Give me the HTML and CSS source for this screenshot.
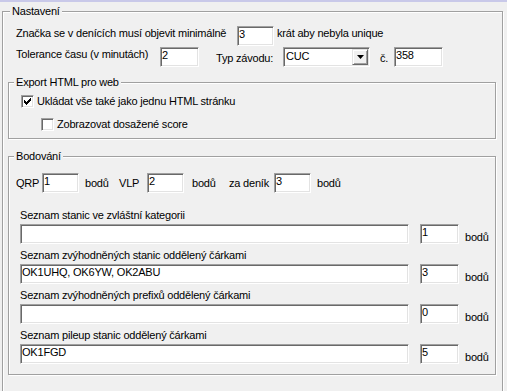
FILE: index.html
```html
<!DOCTYPE html>
<html lang="cs">
<head>
    <meta charset="UTF-8">
    <title>Nastavení</title>
    <link rel="stylesheet" href="styles.css">
</head>
<body>
<div class="topline"></div>
<fieldset class="group main">
    <legend>Nastavení</legend>
    <div class="row row-min">
        <span class="txt lbl-min">Značka se v denících musí objevit minimálně</span>
        <input class="edit edit-s" type="text" value="3">
        <span class="txt after-min">krát aby nebyla unique</span>
    </div>
    <div class="row row-tol">
        <span class="txt lbl-tol">Tolerance času (v minutách)</span>
        <input class="edit edit-m" type="text" value="2">
        <span class="txt mid lbl-typ">Typ závodu:</span>
        <div class="combo">
            <span class="combo-text">CUC</span>
            <span class="combo-btn"><svg width="7" height="4" viewBox="0 0 7 4"><path d="M0 0h7L3.5 4z"/></svg></span>
        </div>
        <span class="txt mid lbl-cislo">č.</span>
        <input class="edit edit-l" type="text" value="358">
    </div>

    <fieldset class="group sub export">
        <legend>Export HTML pro web</legend>
        <label class="chk-row chk-html">
            <span class="check"><svg width="7" height="7" viewBox="0 0 7 7"><path d="M0 2h1v1h1v1h1v-1h1v-1h1v-1h1v-1h1v3h-1v1h-1v1h-1v1h-1v1h-1v-1h-1v-1h-1v-1h-1z"/></svg></span>
            Ukládat vše také jako jednu HTML stránku
        </label>
        <label class="chk-row chk-score">
            <span class="check"></span>
            Zobrazovat dosažené score
        </label>
    </fieldset>

    <fieldset class="group sub points">
        <legend>Bodování</legend>
        <div class="row row-qrp">
            <span class="txt lbl-qrp">QRP</span>
            <input class="edit edit-s" type="text" value="1">
            <span class="txt unit-qrp">bodů</span>
            <span class="txt lbl-vlp">VLP</span>
            <input class="edit edit-s" type="text" value="2">
            <span class="txt unit-vlp">bodů</span>
            <span class="txt lbl-denik">za deník</span>
            <input class="edit edit-s" type="text" value="3">
            <span class="txt unit-denik">bodů</span>
        </div>
        <div class="lists">
            <div class="item">
                <span class="txt">Seznam stanic ve zvláštní kategorii</span>
                <div class="item-row">
                    <input class="edit edit-wide" type="text" value="">
                    <input class="edit edit-m" type="text" value="1">
                    <span class="txt unit">bodů</span>
                </div>
            </div>
            <div class="item">
                <span class="txt">Seznam zvýhodněných stanic oddělený čárkami</span>
                <div class="item-row">
                    <input class="edit edit-wide" type="text" value="OK1UHQ, OK6YW, OK2ABU">
                    <input class="edit edit-m" type="text" value="3">
                    <span class="txt unit">bodů</span>
                </div>
            </div>
            <div class="item">
                <span class="txt">Seznam zvýhodněných prefixů oddělený čárkami</span>
                <div class="item-row">
                    <input class="edit edit-wide" type="text" value="">
                    <input class="edit edit-m" type="text" value="0">
                    <span class="txt unit">bodů</span>
                </div>
            </div>
            <div class="item">
                <span class="txt">Seznam pileup stanic oddělený čárkami</span>
                <div class="item-row">
                    <input class="edit edit-wide" type="text" value="OK1FGD">
                    <input class="edit edit-m" type="text" value="5">
                    <span class="txt unit">bodů</span>
                </div>
            </div>
        </div>
    </fieldset>
</fieldset>
</body>
</html>
```

FILE: styles.css
```css
* {
    margin: 0;
    padding: 0;
    box-sizing: border-box;
}

body {
    width: 507px;
    height: 391px;
    overflow: hidden;
    background: #f0f0f0;
    color: #000;
    font: 11px/13px "Liberation Sans", Arial, sans-serif;
    letter-spacing: -0.2px;
}

.topline {
    height: 2px;
    background: #c9c9e9;
}

/* ramecek skupiny - vyrezany okraj */
.group {
    border: 1px solid #a0a0a0;
    box-shadow: inset 1px 1px #fff, 1px 1px #fff;
    min-width: 0;
}

.group legend {
    padding: 0 2px;
    background: #f0f0f0;
    line-height: 13px;
}

.main {
    width: 501px;
    height: 400px;
    margin: 3px 0 0 2px;
}

.main > legend {
    margin-left: 7px;
}

.sub {
    margin: 0 6px 0 5px;
}

.sub > legend {
    margin-left: 5px;
}

.txt {
    flex-shrink: 0;
    white-space: nowrap;
}

.row {
    display: flex;
    align-items: flex-start;
    height: 20px;
    padding-left: 13px;
}

.row .txt {
    padding-top: 1px;
}

.row .mid {
    align-self: center;
    padding-top: 2px;
}

.row-min {
    margin-top: 8px;
}

.row-tol {
    margin-top: 1px;
}

.lbl-min { width: 221px; }
.after-min { margin-left: 3px; }
.lbl-tol { width: 144px; }
.lbl-typ { width: 67px; margin-left: 17px; }
.lbl-cislo { width: 14px; margin-left: 10px; }

/* editacni policko */
.edit {
    flex-shrink: 0;
    height: 20px;
    padding: 0 0 5px 1px;
    border: 1px solid;
    border-color: #a0a0a0 #fff #fff #a0a0a0;
    box-shadow: inset 1px 1px #696969, inset -1px -1px #e3e3e3;
    background: #fff;
    color: #000;
    font: inherit;
    letter-spacing: inherit;
    outline: none;
}

.edit-s { width: 37px; }
.edit-m { width: 39px; }
.edit-l { width: 49px; }
.edit-wide { width: 389px; }

.combo {
    display: flex;
    flex-shrink: 0;
    width: 87px;
    height: 20px;
    padding: 1px;
    border: 1px solid;
    border-color: #a0a0a0 #fff #fff #a0a0a0;
    box-shadow: inset 1px 1px #696969, inset -1px -1px #e3e3e3;
    background: #fff;
}

.combo-text {
    flex: 1;
    padding: 1px 0 0 1px;
}

.combo-btn {
    display: flex;
    align-items: center;
    justify-content: center;
    width: 16px;
    height: 16px;
    border: 1px solid;
    border-color: #e3e3e3 #696969 #696969 #e3e3e3;
    box-shadow: inset 1px 1px #fff, inset -1px -1px #a0a0a0;
    background: #f0f0f0;
}

.export {
    margin-top: 9px;
    padding-bottom: 7px;
}

.chk-row {
    display: flex;
    align-items: center;
    height: 13px;
}

.chk-html {
    margin-top: 6px;
    padding-left: 12px;
}

.chk-score {
    margin-top: 10px;
    padding-left: 32px;
}

.check {
    display: flex;
    align-items: center;
    justify-content: center;
    width: 13px;
    height: 13px;
    margin-right: 3px;
    border: 1px solid;
    border-color: #a0a0a0 #fff #fff #a0a0a0;
    box-shadow: inset 1px 1px #696969, inset -1px -1px #e3e3e3;
    background: #fff;
}

.points {
    margin-top: 11px;
    padding-bottom: 10px;
}

.row-qrp {
    margin-top: 10px;
    padding-left: 7px;
}

.row-qrp .txt {
    align-self: center;
    padding-top: 0;
}

.lbl-qrp { width: 26px; }
.unit-qrp { width: 34px; margin-left: 6px; }
.lbl-vlp { width: 28px; }
.unit-vlp { width: 37px; margin-left: 8px; }
.lbl-denik { width: 45px; }
.unit-denik { margin-left: 6px; }

.lists {
    display: flex;
    flex-direction: column;
    gap: 5px;
    margin-top: 16px;
    padding-left: 11px;
}

.item {
    display: flex;
    flex-direction: column;
    gap: 2px;
}

.item-row {
    display: flex;
    align-items: center;
}

.item-row .edit-wide {
    margin-right: 11px;
}

.item-row .unit {
    margin-left: 6px;
    padding-top: 6px;
}
```
